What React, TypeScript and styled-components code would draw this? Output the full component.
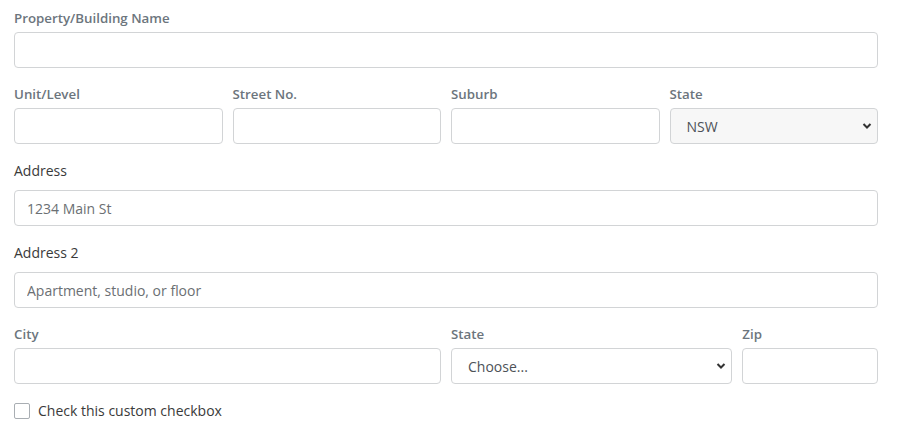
import React from "react";
import styled, { createGlobalStyle } from "styled-components";

const Global = createGlobalStyle`
  html, body { margin: 0; padding: 0; background: #fff; }
  body { font-family: "Open Sans", "Liberation Sans", sans-serif; }
  * { box-sizing: border-box; }
`;

const Form = styled.form`
  padding: 8px 21px 0 14px;
  display: flex;
  flex-direction: column;
  gap: 16px;
`;

const Group = styled.div`
  display: flex;
  flex-direction: column;
  min-width: 0;
`;

const Row = styled.div<{ $cols: string }>`
  display: grid;
  grid-template-columns: ${(p) => p.$cols};
  column-gap: 10px;
`;

const Label = styled.label<{ $plain?: boolean }>`
  display: block;
  margin-bottom: ${(p) => (p.$plain ? "8px" : "4px")};
  font-size: ${(p) => (p.$plain ? "14px" : "13.3px")};
  line-height: ${(p) => (p.$plain ? "22px" : "20px")};
  font-weight: ${(p) => (p.$plain ? 400 : 600)};
  color: ${(p) => (p.$plain ? "#3a3a3a" : "#6c757d")};
`;

const Input = styled.input`
  width: 100%;
  height: 36px;
  padding: 0 12px;
  border: 1px solid #d2d4d6;
  border-radius: 4px;
  background: #fff;
  font-family: inherit;
  font-size: 14px;
  color: #555;
  outline: none;
  &::placeholder { color: #6b6f73; opacity: 1; }
`;

const SelectWrap = styled.div`
  position: relative;
`;

const Select = styled.select<{ $filled?: boolean }>`
  appearance: none;
  -webkit-appearance: none;
  width: 100%;
  height: 36px;
  padding: 0 30px 0 16px;
  border: 1px solid #d2d4d6;
  border-radius: 4px;
  background: ${(p) => (p.$filled ? "#f7f7f7" : "#fff")};
  font-family: inherit;
  font-size: 14px;
  color: #4d5257;
  outline: none;
`;

const Chevron = styled.svg`
  position: absolute;
  right: 6px;
  top: 14px;
  width: 10px;
  height: 8px;
  pointer-events: none;
`;

const CheckRow = styled.label`
  display: flex;
  align-items: center;
  gap: 8px;
  font-size: 14px;
  line-height: 21px;
  color: #3a3a3a;
`;

const Box = styled.span`
  width: 16px;
  height: 16px;
  border: 1px solid #a9aeb3;
  border-radius: 2px;
  background: #fff;
  flex: 0 0 auto;
`;

const Arrow = () => (
  <Chevron viewBox="0 0 10 8">
    <path d="M1.5 2 L5 5.5 L8.5 2" fill="none" stroke="#333" strokeWidth="2" />
  </Chevron>
);

export default function App() {
  return (
    <>
      <Global />
      <Form>
        <Group>
          <Label>Property/Building Name</Label>
          <Input />
        </Group>
        <Row $cols="repeat(4, 1fr)">
          <Group>
            <Label>Unit/Level</Label>
            <Input />
          </Group>
          <Group>
            <Label>Street No.</Label>
            <Input />
          </Group>
          <Group>
            <Label>Suburb</Label>
            <Input />
          </Group>
          <Group>
            <Label>State</Label>
            <SelectWrap>
              <Select $filled defaultValue="NSW">
                <option>NSW</option>
              </Select>
              <Arrow />
            </SelectWrap>
          </Group>
        </Row>
        <Group>
          <Label $plain>Address</Label>
          <Input placeholder="1234 Main St" />
        </Group>
        <Group>
          <Label $plain>Address 2</Label>
          <Input placeholder="Apartment, studio, or floor" />
        </Group>
        <Row $cols="427fr 281.33fr 135.67fr">
          <Group>
            <Label>City</Label>
            <Input />
          </Group>
          <Group>
            <Label>State</Label>
            <SelectWrap>
              <Select defaultValue="Choose...">
                <option>Choose...</option>
              </Select>
              <Arrow />
            </SelectWrap>
          </Group>
          <Group>
            <Label>Zip</Label>
            <Input />
          </Group>
        </Row>
        <CheckRow>
          <Box />
          Check this custom checkbox
        </CheckRow>
      </Form>
    </>
  );
}
